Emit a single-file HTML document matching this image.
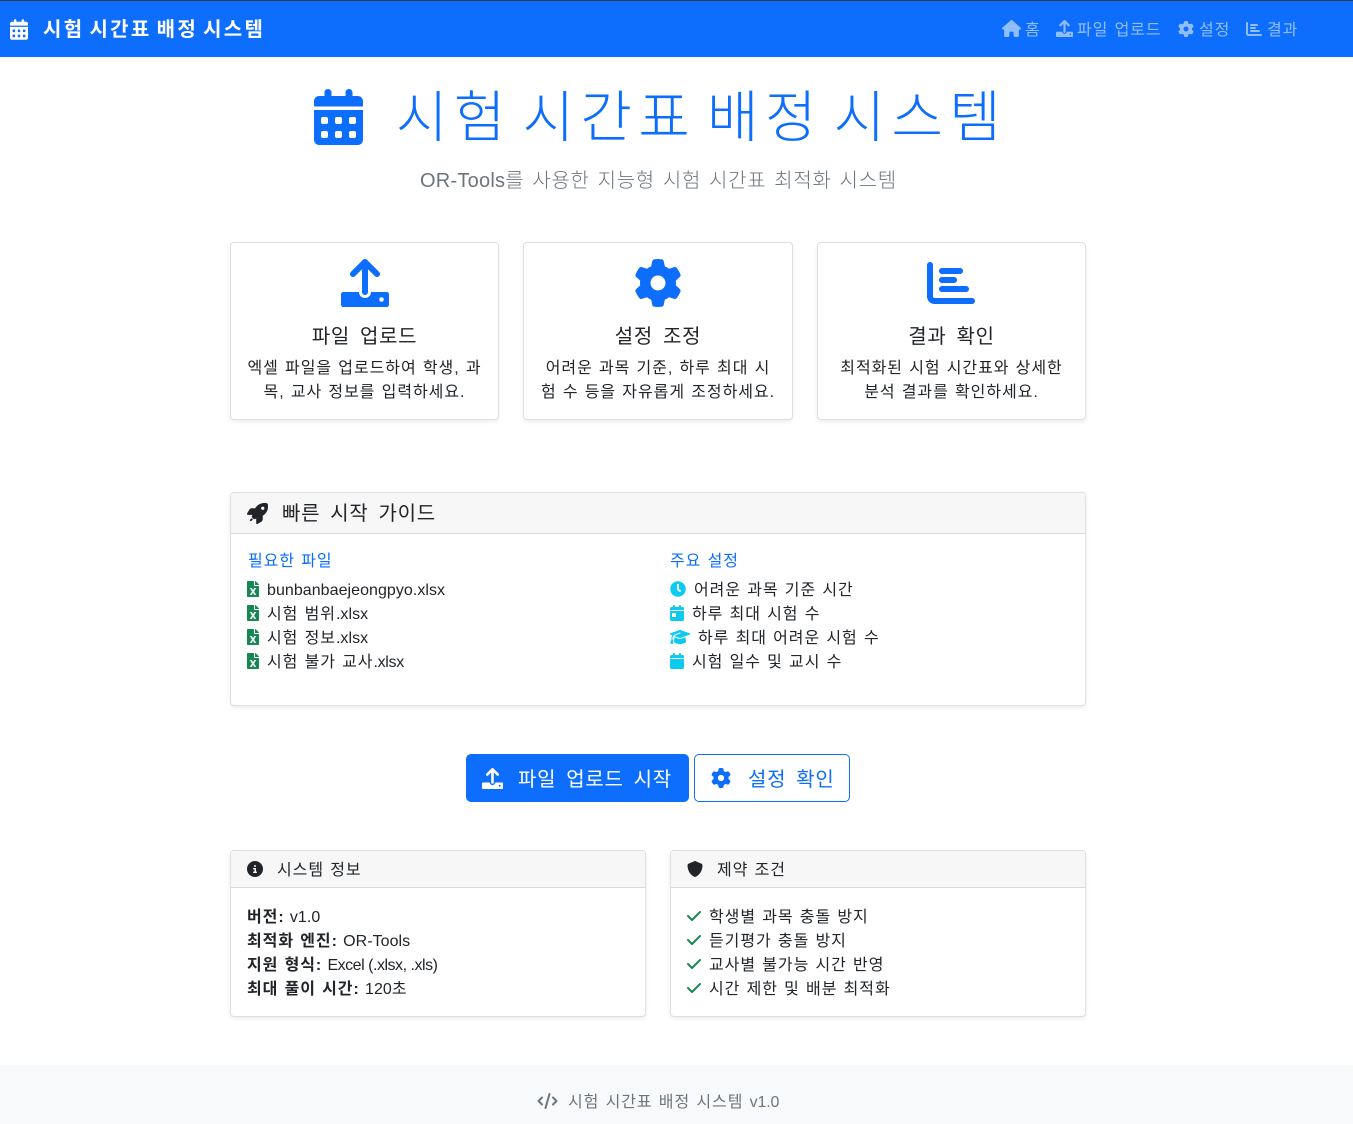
<!DOCTYPE html>
<html lang="ko"><head><meta charset="utf-8"><title>시험 시간표 배정 시스템</title>
<style>
*{box-sizing:border-box;margin:0;padding:0}
html,body{width:1353px;height:1124px;overflow:hidden;background:#fff}
body{position:relative;font-family:"Liberation Sans","Noto Sans CJK KR",sans-serif;font-size:16px;color:#212529}
.t{position:absolute;white-space:nowrap;line-height:24px;letter-spacing:.06em;word-spacing:.05em;margin-top:2px}
.c{text-align:center}
.l{letter-spacing:.003em;word-spacing:0}
.v{margin-left:-1px}
.h20{font-size:20px;line-height:30px;letter-spacing:.035em;word-spacing:.19em}
svg{position:absolute;display:block;fill:currentColor}
.box{position:absolute;background:#fff;border:1px solid rgba(0,0,0,.125);border-radius:4px;box-shadow:0 2px 4px rgba(0,0,0,.075)}
.hd{position:absolute;background:#f7f7f7;border-bottom:1px solid rgba(0,0,0,.125);left:0;right:0;top:0;border-radius:3px 3px 0 0}
.blue{color:#0d6efd}.cyan{color:#0dcaf0}.green{color:#198754}.nav{color:rgba(255,255,255,.55)}
b{font-weight:700}
</style></head><body>
<svg width="0" height="0" style="position:absolute"><defs>
<symbol id="cald" viewBox="0 0 448 512"><path d="M128 0c17.7 0 32 14.3 32 32V64H288V32c0-17.7 14.3-32 32-32s32 14.3 32 32V64h48c26.500 0 48 21.500 48 48v48H0V112C0 85.500 21.500 64 48 64H96V32c0-17.700 14.300-32 32-32zM0 192H448V464c0 26.500-21.500 48-48 48H48c-26.500 0-48-21.500-48-48V192zm64 80v32c0 8.800 7.200 16 16 16h32c8.800 0 16-7.200 16-16V272c0-8.800-7.200-16-16-16H80c-8.800 0-16 7.200-16 16zm128 0v32c0 8.800 7.200 16 16 16h32c8.800 0 16-7.200 16-16V272c0-8.800-7.200-16-16-16H208c-8.800 0-16 7.200-16 16zm144-16c-8.800 0-16 7.200-16 16v32c0 8.800 7.200 16 16 16h32c8.800 0 16-7.200 16-16V272c0-8.800-7.200-16-16-16H336zM64 400v32c0 8.800 7.200 16 16 16h32c8.800 0 16-7.200 16-16V400c0-8.800-7.200-16-16-16H80c-8.800 0-16 7.200-16 16zm144-16c-8.800 0-16 7.200-16 16v32c0 8.800 7.200 16 16 16h32c8.800 0 16-7.200 16-16V400c0-8.800-7.200-16-16-16H208zm112 16v32c0 8.800 7.200 16 16 16h32c8.800 0 16-7.200 16-16V400c0-8.800-7.200-16-16-16H336c-8.800 0-16 7.200-16 16z"/></symbol>
<symbol id="upl" viewBox="0 0 512 512"><path d="M288 109.300V352c0 17.700-14.300 32-32 32s-32-14.300-32-32V109.300l-73.400 73.400c-12.500 12.500-32.800 12.500-45.300 0s-12.500-32.800 0-45.300l128-128c12.500-12.500 32.800-12.500 45.300 0l128 128c12.500 12.500 12.500 32.800 0 45.300s-32.800 12.500-45.300 0L288 109.300zM24 352H192c0 35.300 28.700 64 64 64s64-28.700 64-64H488c13.300 0 24 10.700 24 24v112c0 13.300-10.700 24-24 24H24c-13.300 0-24-10.700-24-24V376c0-13.300 10.700-24 24-24zM432 456a24 24 0 1 0 0-48 24 24 0 1 0 0 48z"/></symbol>
<symbol id="gear" viewBox="0 0 512 512"><path d="M495.900 166.600c3.200 8.700 .5 18.400-6.400 24.600l-43.300 39.400c1.100 8.300 1.700 16.800 1.700 25.400s-.6 17.100-1.700 25.400l43.300 39.400c6.900 6.200 9.600 15.900 6.400 24.600c-4.400 11.900-9.700 23.300-15.800 34.300l-4.700 8.100c-6.600 11-14 21.400-22.100 31.200c-5.900 7.200-15.700 9.600-24.500 6.800l-55.700-17.700c-13.400 10.300-28.200 18.900-44 25.400l-12.500 57.100c-2 9.100-9 16.300-18.200 17.800c-13.800 2.300-28 3.500-42.500 3.500s-28.700-1.200-42.500-3.500c-9.200-1.500-16.200-8.700-18.200-17.800l-12.500-57.100c-15.800-6.500-30.600-15.100-44-25.400L83.100 425.900c-8.800 2.800-18.600 .3-24.500-6.800c-8.100-9.800-15.500-20.200-22.100-31.200l-4.700-8.100c-6.100-11-11.400-22.400-15.800-34.300c-3.200-8.700-.5-18.400 6.400-24.600l43.300-39.400C64.600 273.100 64 264.600 64 256s.6-17.100 1.700-25.400L22.400 191.200c-6.900-6.200-9.600-15.900-6.400-24.600c4.400-11.900 9.700-23.300 15.800-34.300l4.700-8.100c6.600-11 14-21.400 22.100-31.200c5.900-7.200 15.700-9.600 24.500-6.800l55.700 17.700c13.400-10.300 28.200-18.900 44-25.400l12.500-57.100c2-9.100 9-16.300 18.200-17.800C227.300 1.200 241.500 0 256 0s28.700 1.200 42.500 3.500c9.200 1.500 16.200 8.700 18.200 17.800l12.500 57.100c15.800 6.500 30.600 15.100 44 25.400l55.700-17.700c8.800-2.800 18.600-.3 24.500 6.800c8.100 9.800 15.500 20.200 22.100 31.200l4.700 8.100c6.100 11 11.400 22.400 15.800 34.300zM256 336a80 80 0 1 0 0-160 80 80 0 1 0 0 160z"/></symbol>
<symbol id="chart" viewBox="0 0 512 512"><path d="M32 32c17.700 0 32 14.300 32 32V400c0 8.800 7.200 16 16 16H480c17.700 0 32 14.300 32 32s-14.300 32-32 32H80c-44.200 0-80-35.800-80-80V64C0 46.300 14.300 32 32 32zm96 96c0-17.700 14.300-32 32-32l192 0c17.700 0 32 14.300 32 32s-14.300 32-32 32l-192 0c-17.700 0-32-14.300-32-32zm32 64H288c17.700 0 32 14.300 32 32s-14.300 32-32 32H160c-17.700 0-32-14.300-32-32s14.300-32 32-32zm0 96H416c17.700 0 32 14.300 32 32s-14.300 32-32 32H160c-17.700 0-32-14.300-32-32s14.300-32 32-32z"/></symbol>
<symbol id="home" viewBox="0 0 576 512"><path d="M575.800 255.500c0 18-15 32.100-32 32.100h-32l.7 160.200c0 2.700-.2 5.400-.5 8.100V472c0 22.100-17.900 40-40 40H456c-1.100 0-2.200 0-3.300-.1c-1.400 .1-2.800 .1-4.200 .1H416 392c-22.100 0-40-17.900-40-40V448 384c0-17.700-14.300-32-32-32H256c-17.700 0-32 14.300-32 32v64 24c0 22.100-17.900 40-40 40H160 128.100c-1.500 0-3-.1-4.500-.2c-1.200 .1-2.400 .2-3.600 .2H104c-22.100 0-40-17.900-40-40V360c0-.9 0-1.900 .1-2.800V287.600H32c-18 0-32-14-32-32.100c0-9 3-17 10-24L266.400 8c7-7 15-8 22-8s15 2 21 7L564.800 231.500c8 7 12 15 11 24z"/></symbol>
<symbol id="rocket" viewBox="0 0 512 512"><path d="M156.600 384.900L125.700 354c-8.500-8.500-11.500-20.800-7.700-32.200c3-8.900 7-20.500 11.800-33.800L24 288c-8.600 0-16.600-4.600-20.900-12.100s-4.200-16.700 .2-24.100l52.500-88.500c13-21.900 36.500-35.300 61.900-35.300l82.300 0c2.400-4 4.800-7.700 7.200-11.300C289.100-4.100 411.100-8.100 483.900 5.300c11.600 2.100 20.600 11.200 22.800 22.800c13.400 72.900 9.300 194.800-111.400 276.700c-3.500 2.400-7.300 4.800-11.300 7.200v82.300c0 25.400-13.400 49-35.300 61.900l-88.500 52.500c-7.400 4.400-16.600 4.500-24.100 .2s-12.100-12.200-12.100-20.900V380.800c-14.100 4.900-26.400 8.900-35.700 11.900c-11.200 3.600-23.400 .5-31.800-7.800zM384 168a40 40 0 1 0 0-80 40 40 0 1 0 0 80z"/><path d="M120 375c-14 0-30 10-38 24-8 14-14 34-14 46 16 0 34-6 47-14 14-8 24-24 24-38 0-12-9-18-19-18z"/></symbol>
<symbol id="xls" viewBox="0 0 384 512"><path d="M224 136V0H24C10.700 0 0 10.700 0 24v464c0 13.300 10.700 24 24 24h336c13.300 0 24-10.700 24-24V160H248c-13.200 0-24-10.800-24-24zm60.100 106.500L224 336l60.100 93.500c5.100 8-.6 18.500-10.100 18.500h-34.900c-4.400 0-8.500-2.400-10.600-6.300C208.900 405.500 192 373 192 373c-6.400 14.800-10 20-36.600 68.800-2.100 3.900-6.100 6.300-10.500 6.300H110c-9.500 0-15.200-10.500-10.100-18.500l60.300-93.500-60.300-93.500c-5.200-8 .6-18.500 10.100-18.500h34.800c4.400 0 8.500 2.400 10.600 6.300 26.100 48.800 20 33.600 36.600 68.500 0 0 6.100-11.700 36.600-68.500 2.100-3.900 6.200-6.300 10.600-6.300H274c9.500-.1 15.200 10.400 10.100 18.400zM384 121.900v6.100H256V0h6.100c6.400 0 12.500 2.500 17 7l97.900 98c4.500 4.500 7 10.600 7 16.900z"/></symbol>
<symbol id="clock" viewBox="0 0 512 512"><path d="M256 8C119 8 8 119 8 256s111 248 248 248 248-111 248-248S393 8 256 8zm92.490 313l-20 25a16 16 0 0 1-22.490 2.500l-67-49.720a40 40 0 0 1-15-31.230V112a16 16 0 0 1 16-16h32a16 16 0 0 1 16 16v144l58 42.500a16 16 0 0 1 2.490 22.500z"/></symbol>
<symbol id="calday" viewBox="0 0 448 512"><path d="M128 0c17.700 0 32 14.300 32 32V64H288V32c0-17.700 14.300-32 32-32s32 14.300 32 32V64h48c26.500 0 48 21.500 48 48v48H0V112C0 85.500 21.500 64 48 64H96V32c0-17.700 14.300-32 32-32zM0 192H448V464c0 26.500-21.500 48-48 48H48c-26.500 0-48-21.500-48-48V192zm80 64c-8.800 0-16 7.200-16 16v96c0 8.800 7.200 16 16 16h96c8.800 0 16-7.200 16-16V272c0-8.800-7.200-16-16-16H80z"/></symbol>
<symbol id="cal" viewBox="0 0 448 512"><path d="M96 32V64H48C21.500 64 0 85.500 0 112v48H448V112c0-26.500-21.500-48-48-48H352V32c0-17.700-14.300-32-32-32s-32 14.300-32 32V64H160V32c0-17.700-14.300-32-32-32S96 14.300 96 32zM448 192H0V464c0 26.500 21.500 48 48 48H400c26.500 0 48-21.500 48-48V192z"/></symbol>
<symbol id="grad" viewBox="0 0 640 512"><path d="M320 32c-8.100 0-16.100 1.400-23.700 4.100L15.800 137.400C6.300 140.900 0 149.900 0 160s6.300 19.100 15.800 22.600l57.900 20.900C57.300 229.300 48 259.800 48 291.900v28.100c0 28.400-10.800 57.700-22.300 80.800c-6.500 13-13.900 25.800-22.500 37.600C0 442.700-.9 448.300 .9 453.400s6 8.900 11.200 10.200l64 16c4.200 1.100 8.700 .3 12.400-2s6.300-6.100 7.100-10.400c8.600-42.800 4.300-81.200-2.100-108.700C90.300 344.300 86 329.800 80 316.500V291.900c0-30.200 10.200-58.700 27.900-81.500c12.900-15.500 29.600-28 49.200-35.700l157-61.700c8.200-3.200 17.500 .8 20.700 9s-.8 17.500-9 20.700l-157 61.700c-12.400 4.900-23.300 12.400-32.200 21.600l159.600 57.600c7.600 2.700 15.600 4.100 23.700 4.100s16.100-1.400 23.700-4.100L624.200 182.600c9.500-3.400 15.800-12.500 15.800-22.600s-6.300-19.100-15.800-22.600L343.700 36.100C336.100 33.400 328.100 32 320 32zM128 408c0 35.300 86 72 192 72s192-36.700 192-72L496.700 262.600 354.500 314c-11.100 4-22.800 6-34.500 6s-23.500-2-34.500-6L143.300 262.600 128 408z"/></symbol>
<symbol id="info" viewBox="0 0 512 512"><path d="M256 512A256 256 0 1 0 256 0a256 256 0 1 0 0 512zM216 336h24V272H216c-13.300 0-24-10.700-24-24s10.700-24 24-24h48c13.300 0 24 10.700 24 24v88h8c13.300 0 24 10.700 24 24s-10.700 24-24 24H216c-13.300 0-24-10.700-24-24s10.700-24 24-24zm40-208a32 32 0 1 1 0 64 32 32 0 1 1 0-64z"/></symbol>
<symbol id="shield" viewBox="0 0 512 512"><path d="M256 0c4.600 0 9.200 1 13.400 2.900L457.700 82.800c22 9.300 38.400 31 38.300 57.200c-.5 99.200-41.300 280.700-213.600 363.200c-16.700 8-36.100 8-52.800 0C57.300 420.700 16.500 239.200 16 140c-.1-26.200 16.300-47.900 38.300-57.200L242.700 2.900C246.800 1 251.400 0 256 0z"/></symbol>
<symbol id="check" viewBox="0 0 448 512"><path d="M438.600 105.400c12.500 12.500 12.500 32.800 0 45.300l-256 256c-12.500 12.500-32.800 12.500-45.300 0l-128-128c-12.500-12.500-12.500-32.800 0-45.300s32.800-12.500 45.300 0L160 338.700 393.400 105.400c12.500-12.500 32.800-12.500 45.300 0z"/></symbol>
<symbol id="code" viewBox="0 0 640 512"><path d="M392.800 1.200c-17-4.900-34.700 5-39.600 22l-128 448c-4.900 17 5 34.700 22 39.600s34.700-5 39.600-22l128-448c4.900-17-5-34.700-22-39.600zm80.600 120.100c-12.500 12.500-12.500 32.800 0 45.300L562.700 256l-89.400 89.400c-12.500 12.500-12.500 32.800 0 45.300s32.800 12.500 45.300 0l112-112c12.500-12.500 12.500-32.800 0-45.300l-112-112c-12.500-12.500-32.800-12.500-45.300 0zm-306.700 0c-12.500-12.500-32.800-12.500-45.300 0l-112 112c-12.500 12.500-12.500 32.800 0 45.300l112 112c12.500 12.500 32.800 12.500 45.300 0s12.500-32.800 0-45.300L77.300 256l89.400-89.400c12.500-12.500 12.500-32.800 0-45.300z"/></symbol>
</defs></svg>

<div style="position:absolute;left:0;top:0;width:1353px;height:57px;background:#0d6efd;border-top:1px solid #2f3a4a"></div>
<svg style="left:10px;top:19px;color:#fff" width="18" height="21"><use href="#cald"/></svg>
<div class="t h20" style="left:43px;top:13px;color:#fff;font-weight:700;letter-spacing:2.3px;word-spacing:-2.8px">시험 시간표 배정 시스템</div>
<svg class="nav" style="left:1002px;top:20px" width="19" height="17"><use href="#home"/></svg>
<div class="t nav" style="left:1025px;top:17px">홈</div>
<svg class="nav" style="left:1056px;top:20px" width="17" height="17"><use href="#upl"/></svg>
<div class="t nav" style="left:1077px;top:17px">파일 업로드</div>
<svg class="nav" style="left:1178px;top:21px" width="16" height="16"><use href="#gear"/></svg>
<div class="t nav" style="left:1199px;top:17px">설정</div>
<svg class="nav" style="left:1246px;top:21px" width="16" height="16"><use href="#chart"/></svg>
<div class="t nav" style="left:1267px;top:17px">결과</div>

<svg class="blue" style="left:314px;top:89px" width="49" height="56"><use href="#cald"/></svg>
<div class="t blue" style="left:396px;top:83px;font-size:56px;line-height:66px;font-weight:300;letter-spacing:6.3px;word-spacing:-10.9px">시험 시간표 배정 시스템</div>
<div class="t h20" style="left:420px;top:164px;color:#6c757d;font-weight:300;word-spacing:.085em"><span class="l" style="letter-spacing:.012em">OR-Tools</span>를 사용한 지능형 시험 시간표 최적화 시스템</div>

<div class="box" style="left:230px;top:242px;width:269px;height:178px"></div>
<div class="box" style="left:523px;top:242px;width:270px;height:178px"></div>
<div class="box" style="left:817px;top:242px;width:269px;height:178px"></div>
<svg class="blue" style="left:341px;top:259px" width="48" height="48"><use href="#upl"/></svg>
<svg class="blue" style="left:634px;top:259px" width="48" height="48"><use href="#gear"/></svg>
<svg class="blue" style="left:927px;top:259px" width="48" height="48"><use href="#chart"/></svg>
<div class="t h20 c" style="left:230px;width:269px;top:320px">파일 업로드</div>
<div class="t h20 c" style="left:523px;width:270px;top:320px">설정 조정</div>
<div class="t h20 c" style="left:817px;width:269px;top:320px">결과 확인</div>
<div class="t c" style="left:230px;width:269px;top:355px">엑셀 파일을 업로드하여 학생, 과</div>
<div class="t c" style="left:230px;width:269px;top:379px">목, 교사 정보를 입력하세요.</div>
<div class="t c" style="left:523px;width:270px;top:355px">어려운 과목 기준, 하루 최대 시</div>
<div class="t c" style="left:523px;width:270px;top:379px">험 수 등을 자유롭게 조정하세요.</div>
<div class="t c" style="left:817px;width:269px;top:355px">최적화된 시험 시간표와 상세한</div>
<div class="t c" style="left:817px;width:269px;top:379px">분석 결과를 확인하세요.</div>

<div class="box" style="left:230px;top:492px;width:856px;height:214px"><div class="hd" style="height:41px"></div></div>
<svg style="left:247px;top:503px" width="21" height="21"><use href="#rocket"/></svg>
<div class="t h20" style="left:282px;top:497px">빠른 시작 가이드</div>
<div class="t blue" style="left:248px;top:548px">필요한 파일</div>
<div class="t blue" style="left:670px;top:548px">주요 설정</div>
<svg class="green" style="left:247px;top:581px" width="12" height="16"><use href="#xls"/></svg>
<svg class="green" style="left:247px;top:605px" width="12" height="16"><use href="#xls"/></svg>
<svg class="green" style="left:247px;top:629px" width="12" height="16"><use href="#xls"/></svg>
<svg class="green" style="left:247px;top:653px" width="12" height="16"><use href="#xls"/></svg>
<div class="t l" style="left:267px;top:577px">bunbanbaejeongpyo.xlsx</div>
<div class="t" style="left:267px;top:601px">시험 범위<span class="l">.xlsx</span></div>
<div class="t" style="left:267px;top:625px">시험 정보<span class="l">.xlsx</span></div>
<div class="t" style="left:267px;top:649px">시험 불가 교사<span class="l" style="letter-spacing:-.02em">.xlsx</span></div>
<svg class="cyan" style="left:670px;top:581px" width="16" height="16"><use href="#clock"/></svg>
<svg class="cyan" style="left:670px;top:605px" width="14" height="16"><use href="#calday"/></svg>
<svg class="cyan" style="left:670px;top:629px" width="20" height="16"><use href="#grad"/></svg>
<svg class="cyan" style="left:670px;top:653px" width="14" height="16"><use href="#cal"/></svg>
<div class="t" style="left:694px;top:577px">어려운 과목 기준 시간</div>
<div class="t" style="left:692px;top:601px">하루 최대 시험 수</div>
<div class="t" style="left:698px;top:625px">하루 최대 어려운 시험 수</div>
<div class="t" style="left:692px;top:649px">시험 일수 및 교시 수</div>

<div style="position:absolute;left:466px;top:754px;width:223px;height:48px;background:#0d6efd;border-radius:5px"></div>
<svg style="left:482px;top:768px;color:#fff" width="21" height="21"><use href="#upl"/></svg>
<div class="t h20" style="left:518px;top:763px;color:#fff">파일 업로드 시작</div>
<div style="position:absolute;left:694px;top:754px;width:156px;height:48px;border:1px solid #0d6efd;border-radius:5px"></div>
<svg class="blue" style="left:711px;top:768px" width="20" height="20"><use href="#gear"/></svg>
<div class="t h20 blue" style="left:748px;top:763px">설정 확인</div>

<div class="box" style="left:230px;top:850px;width:416px;height:167px"><div class="hd" style="height:37px"></div></div>
<div class="box" style="left:670px;top:850px;width:416px;height:167px"><div class="hd" style="height:37px"></div></div>
<svg style="left:247px;top:861px" width="16" height="16"><use href="#info"/></svg>
<div class="t" style="left:277px;top:857px">시스템 정보</div>
<svg style="left:687px;top:861px" width="16" height="16"><use href="#shield"/></svg>
<div class="t" style="left:717px;top:857px">제약 조건</div>
<div class="t" style="left:247px;top:904px"><b>버전:</b> <span class="l v">v1.0</span></div>
<div class="t" style="left:247px;top:928px"><b>최적화 엔진:</b> <span class="l v">OR-Tools</span></div>
<div class="t" style="left:247px;top:952px"><b>지원 형식:</b> <span class="l v" style="letter-spacing:-.03em">Excel (.xlsx, .xls)</span></div>
<div class="t" style="left:247px;top:976px"><b>최대 풀이 시간:</b> <span class="l v">120</span>초</div>
<svg class="green" style="left:687px;top:908px" width="14" height="16"><use href="#check"/></svg>
<svg class="green" style="left:687px;top:932px" width="14" height="16"><use href="#check"/></svg>
<svg class="green" style="left:687px;top:956px" width="14" height="16"><use href="#check"/></svg>
<svg class="green" style="left:687px;top:980px" width="14" height="16"><use href="#check"/></svg>
<div class="t" style="left:709px;top:904px">학생별 과목 충돌 방지</div>
<div class="t" style="left:709px;top:928px">듣기평가 충돌 방지</div>
<div class="t" style="left:709px;top:952px">교사별 불가능 시간 반영</div>
<div class="t" style="left:709px;top:976px">시간 제한 및 배분 최적화</div>

<div style="position:absolute;left:0;top:1065px;width:1353px;height:59px;background:#f8f9fa"></div>
<svg style="left:537px;top:1093px;color:#6c757d" width="21" height="16"><use href="#code"/></svg>
<div class="t" style="left:568px;top:1089px;color:#6c757d">시험 시간표 배정 시스템 <span class="l" style="letter-spacing:-.01em">v1.0</span></div>
</body></html>
